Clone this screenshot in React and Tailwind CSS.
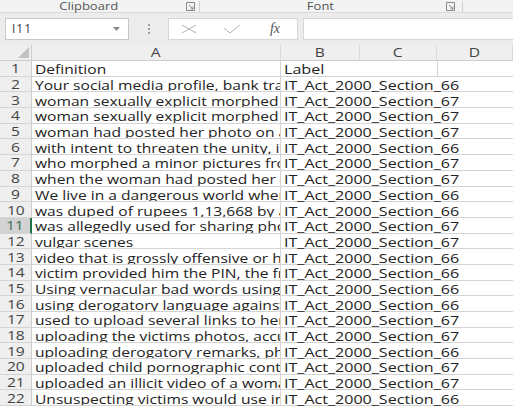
import React from "react";

const rows = [
  ["Definition", "Label"],
  ["Your social media profile, bank transactions and emails", "IT_Act_2000_Section_66"],
  ["woman sexually explicit morphed photos", "IT_Act_2000_Section_67"],
  ["woman sexually explicit morphed pictures", "IT_Act_2000_Section_67"],
  ["woman had posted her photo on a social site", "IT_Act_2000_Section_67"],
  ["with intent to threaten the unity, integrity", "IT_Act_2000_Section_66"],
  ["who morphed a minor pictures from social", "IT_Act_2000_Section_67"],
  ["when the woman had posted her photo online", "IT_Act_2000_Section_67"],
  ["We live in a dangerous world where", "IT_Act_2000_Section_66"],
  ["was duped of rupees 1,13,668 by a fraudster", "IT_Act_2000_Section_66"],
  ["was allegedly used for sharing photos", "IT_Act_2000_Section_67"],
  ["vulgar scenes", "IT_Act_2000_Section_67"],
  ["video that is grossly offensive or has menacing", "IT_Act_2000_Section_66"],
  ["victim provided him the PIN, the fraudster", "IT_Act_2000_Section_66"],
  ["Using vernacular bad words using obscene", "IT_Act_2000_Section_66"],
  ["using derogatory language against women", "IT_Act_2000_Section_66"],
  ["used to upload several links to her profile", "IT_Act_2000_Section_67"],
  ["uploading the victims photos, accused", "IT_Act_2000_Section_67"],
  ["uploading derogatory remarks, photos", "IT_Act_2000_Section_66"],
  ["uploaded child pornographic content", "IT_Act_2000_Section_67"],
  ["uploaded an illicit video of a woman", "IT_Act_2000_Section_67"],
  ["Unsuspecting victims would use infected", "IT_Act_2000_Section_66"],
];

const font = { fontFamily: '"Open Sans", "Noto Sans", sans-serif' };

function Launcher() {
  return (
    <svg width="9" height="9" viewBox="0 0 9 9" className="text-[#8a8a8a]">
      <path d="M0.5 0.5h8v8h-8z" fill="none" stroke="currentColor" strokeWidth="1" />
      <path d="M3 3l4 4M7 4.5V7H4.5" fill="none" stroke="currentColor" strokeWidth="1" />
    </svg>
  );
}

function Stretch({ children, className = "" }) {
  return <span className={`inline-block scale-x-[1.3] whitespace-nowrap ${className}`}>{children}</span>;
}

export default function App() {
  return (
    <div className="w-[513px] h-[407px] overflow-hidden bg-white flex flex-col" style={font}>
      {/* ribbon group labels */}
      <div className="h-[13px] bg-[#f3f3f3] flex items-center text-[10px] text-[#555] border-b border-[#dadada] shrink-0">
        <div className="w-[200px] flex items-center border-r border-[#d0d0d0] h-[11px]">
          <div className="w-[178px] flex justify-center"><Stretch className="origin-center">Clipboard</Stretch></div>
          <div className="ml-[8px]"><Launcher /></div>
        </div>
        <div className="w-[263px] flex items-center border-r border-[#d0d0d0] h-[11px]">
          <div className="w-[240px] flex justify-center"><Stretch className="origin-center">Font</Stretch></div>
          <div className="ml-[6px]"><Launcher /></div>
        </div>
      </div>

      {/* formula bar */}
      <div className="h-[32px] bg-[#ececec] flex items-center shrink-0 pt-[4px] pb-[5px]">
        <div className="ml-[5px] w-[124px] h-[22px] bg-white border border-[#c8c8c8] flex items-center justify-between pl-[6px] pr-[8px]">
          <span className="text-[12px] text-[#444] tracking-[1px]">I11</span>
          <svg width="7" height="4" viewBox="0 0 7 4"><path d="M0 0h7L3.5 4z" fill="#8a8a8a" /></svg>
        </div>
        <div className="w-[39px] flex justify-center">
          <div className="flex flex-col gap-[2px]">
            <span className="w-[2px] h-[2px] bg-[#a0a0a0]" />
            <span className="w-[2px] h-[2px] bg-[#a0a0a0]" />
            <span className="w-[2px] h-[2px] bg-[#a0a0a0]" />
          </div>
        </div>
        <div className="w-[130px] h-[22px] bg-white border border-[#d6d6d6] flex items-center">
          <div className="w-[40px] flex justify-center">
            <svg width="16" height="10" viewBox="0 0 16 10"><path d="M1 1l14 8M15 1L1 9" stroke="#b4b4b4" strokeWidth="1" fill="none" /></svg>
          </div>
          <div className="w-[46px] flex justify-center">
            <svg width="18" height="10" viewBox="0 0 18 10"><path d="M1 4l6 5L17 1" stroke="#b4b4b4" strokeWidth="1" fill="none" /></svg>
          </div>
          <div className="w-[40px] flex justify-center">
            <span className="italic text-[14px] text-[#555] leading-none" style={{ fontFamily: '"Liberation Serif", serif' }}>fx</span>
          </div>
        </div>
        <div className="ml-[5px] flex-1 h-[22px] bg-white border-l border-y border-[#d6d6d6]" />
      </div>

      {/* column headers */}
      <div className="h-[16px] grid grid-cols-[32px_249px_79px_77px_76px] bg-[#efefef] border-b border-[#cdcdcd] text-[12px] text-[#444] shrink-0">
        <div className="relative border-r border-[#cdcdcd]">
          <svg className="absolute right-[2px] bottom-[2px]" width="11" height="11" viewBox="0 0 11 11"><path d="M11 0v11H0z" fill="#c2c2c2" /></svg>
        </div>
        {["A", "B", "C", "D"].map((c) => (
          <div key={c} className="flex items-center justify-center border-r border-[#dadada] leading-none">
            <Stretch className="origin-center">{c}</Stretch>
          </div>
        ))}
      </div>

      {/* grid */}
      <div className="flex flex-col text-[12px] text-[#222] leading-none">
        {rows.map(([a, b], i) => {
          const sel = i === 10;
          return (
            <div key={i} className="h-[15.7px] shrink-0 grid grid-cols-[32px_249px_79px_77px_76px]">
              <div className={`flex items-center justify-center border-b border-[#d4d4d4] ${sel ? "bg-[#d2d2d2] text-[#3b6e50] border-r-2 border-r-[#217346]" : "bg-[#efefef] text-[#444] border-r border-r-[#cdcdcd]"}`}>
                <Stretch className="origin-center translate-y-[1px]">{i + 1}</Stretch>
              </div>
              <div className="overflow-hidden border-r border-b border-[#d4d4d4] flex items-center pl-[3px]">
                <Stretch className="origin-left translate-y-[1.5px]">{a}</Stretch>
              </div>
              <div className="border-b border-[#d4d4d4] flex items-center pl-[3px] relative z-10">
                <Stretch className="origin-left translate-y-[1.5px] scale-x-[1.34]">{b}</Stretch>
              </div>
              <div className="border-b border-[#d4d4d4]" />
              <div className={`border-b border-[#d4d4d4] ${i === 0 ? "border-l" : ""}`} />
            </div>
          );
        })}
      </div>
    </div>
  );
}
